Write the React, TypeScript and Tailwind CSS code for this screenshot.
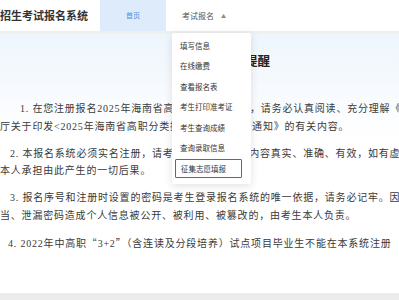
import React from 'react';

const menuItems = ['填写信息', '在线缴费', '查看报名表', '考生打印准考证', '考生查询成绩', '查询录取信息'];

type Line = { text: React.ReactNode; pl: string };

const Q: React.FC<{ children: React.ReactNode }> = ({ children }) => (
  <span lang="zh-CN" className="font-['Noto_Sans_CJK_SC',sans-serif]">
    {children}
  </span>
);

const paras: Line[][] = [
  [
    { text: '1. 在您注册报名2025年海南省高职分类招生考试，请务必认真阅读、充分理解《', pl: 'pl-[20px]' },
    { text: '厅关于印发<2025年海南省高职分类招生工作的方案>通知》的有关内容。', pl: 'pl-0' },
  ],
  [
    { text: '2. 本报名系统必须实名注册，请考生确保所填报的内容真实、准确、有效，如有虚', pl: 'pl-[10px]' },
    { text: '本人承担由此产生的一切后果。', pl: 'pl-0' },
  ],
  [
    { text: '3. 报名序号和注册时设置的密码是考生登录报名系统的唯一依据，请务必记牢。因', pl: 'pl-[10px]' },
    { text: '当、泄漏密码造成个人信息被公开、被利用、被篡改的，由考生本人负责。', pl: 'pl-0' },
  ],
  [
    {
      text: (
        <>
          4. 2022年中高职<Q>“</Q>3+2<Q>”</Q>（含连读及分段培养）试点项目毕业生不能在本系统注册
        </>
      ),
      pl: 'pl-[8px]',
    },
  ],
];

const App: React.FC = () => {
  return (
    <div lang="zh-CN" className="relative w-[399px] h-[300px] overflow-hidden bg-white font-['Noto_Sans_CJK_SC',sans-serif]">
      {/* Header */}
      <div className="flex h-[31px] items-stretch bg-white">
        <div className="self-center text-[11px] font-bold leading-none text-[#333] whitespace-nowrap">
          招生考试报名系统
        </div>
        <div className="ml-[12px] flex w-[66px] items-center justify-center bg-[#ddebfb] text-[7px] text-[#4d8fdc]">
          首页
        </div>
        <div className="ml-[16px] flex items-center gap-[7px] text-[8px] text-[#555]">
          <span>考试报名</span>
          <span className="text-[5px] text-[#888]">▲</span>
        </div>
      </div>
      <div className="h-[3px] bg-[#efefef]" />

      {/* Card */}
      <div className="h-[259px] bg-gradient-to-b from-[#eef5fd] to-white to-40% pt-[17px]">
        <div className="ml-[195px] h-[20px] text-[12.5px] font-bold leading-[20px] text-[#222] whitespace-nowrap">
          报名重要提醒
        </div>
        <div className="mt-[29px] font-['Liberation_Serif','Noto_Sans_CJK_SC',serif] text-[10px] leading-[17.5px] tracking-[0.8px] text-[#3a3a3a]">
          {paras.map((p, i) => (
            <div key={i} className="mb-[9.5px]">
              {p.map((l, j) => (
                <div key={j} className={`${l.pl} whitespace-nowrap overflow-hidden`}>
                  {l.text}
                </div>
              ))}
            </div>
          ))}
        </div>
      </div>
      <div className="h-[7px] bg-[#ececec]" />

      {/* Dropdown menu */}
      <div className="absolute left-[172px] top-[33px] w-[79px] rounded-[2px] bg-white pt-[2px] pb-[5px] shadow-[0_2px_8px_rgba(0,0,0,0.12)]">
        {menuItems.map((m) => (
          <div key={m} className="flex h-[20.5px] items-center pl-[8px] text-[7.5px] text-[#333] whitespace-nowrap">
            {m}
          </div>
        ))}
        <div className="flex h-[20.5px] items-center">
          <div className="mx-[3px] flex h-[19px] w-[67px] items-center rounded-[1px] border border-[#d9363e] pl-[5px] text-[7.5px] text-[#333] whitespace-nowrap">
            征集志愿填报
          </div>
        </div>
      </div>
    </div>
  );
};

export default App;
